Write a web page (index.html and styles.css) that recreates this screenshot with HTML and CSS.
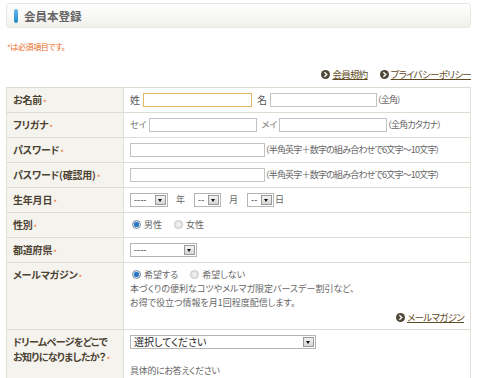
FILE: index.html
```html
<!DOCTYPE html>
<html lang="ja">
<head>
<meta charset="utf-8">
<title>会員本登録</title>
<link rel="stylesheet" href="styles.css">
</head>
<body>
<div class="page">
  <div class="head"><span class="bar"></span><h1>会員本登録</h1></div>
  <p class="note"><span class="req">*</span>は必須項目です。</p>
  <div class="links">
    <a href="#"><svg class="ico" viewBox="0 0 9 9" width="9" height="9"><circle cx="4.5" cy="4.5" r="4.5" fill="#4f4737"/><path d="M3.4 2.3 L5.8 4.5 L3.4 6.7" fill="none" stroke="#fff" stroke-width="1.4"/></svg><span>会員規約</span></a>
    <a href="#"><svg class="ico" viewBox="0 0 9 9" width="9" height="9"><circle cx="4.5" cy="4.5" r="4.5" fill="#4f4737"/><path d="M3.4 2.3 L5.8 4.5 L3.4 6.7" fill="none" stroke="#fff" stroke-width="1.4"/></svg><span>プライバシーポリシー</span></a>
  </div>
  <table class="form">
    <colgroup><col class="c1"><col class="c2"></colgroup>
    <tr>
      <th>お名前<span class="req">*</span></th>
      <td><span class="lbl">姓</span><span class="inp focus w109"></span><span class="lbl l2">名</span><span class="inp w107"></span><span class="hint">（全角）</span></td>
    </tr>
    <tr>
      <th>フリガナ<span class="req">*</span></th>
      <td><span class="lbl gray">セイ</span><span class="inp w108"></span><span class="lbl l2 gray">メイ</span><span class="inp w108"></span><span class="hint">（全角カタカナ）</span></td>
    </tr>
    <tr>
      <th>パスワード<span class="req">*</span></th>
      <td><span class="inp w135"></span><span class="hint">（半角英字＋数字の組み合わせで6文字～10文字）</span></td>
    </tr>
    <tr>
      <th>パスワード(確認用)<span class="req">*</span></th>
      <td><span class="inp w135"></span><span class="hint">（半角英字＋数字の組み合わせで6文字～10文字）</span></td>
    </tr>
    <tr>
      <th>生年月日<span class="req">*</span></th>
      <td><span class="sel w38"><span class="val">----</span><span class="btn"></span></span><span class="unit">年</span><span class="sel w27"><span class="val">--</span><span class="btn"></span></span><span class="unit">月</span><span class="sel w27"><span class="val">--</span><span class="btn"></span></span><span class="unit u3">日</span></td>
    </tr>
    <tr>
      <th>性別<span class="req">*</span></th>
      <td><span class="radio on"></span><span class="rl">男性</span><span class="radio r2"></span><span class="rl">女性</span></td>
    </tr>
    <tr>
      <th>都道府県<span class="req">*</span></th>
      <td><span class="sel w67"><span class="val">----</span><span class="btn"></span></span></td>
    </tr>
    <tr class="mail">
      <th class="top">メールマガジン<span class="req">*</span></th>
      <td>
        <div class="line"><span class="radio on"></span><span class="rl">希望する</span><span class="radio r2"></span><span class="rl">希望しない</span></div>
        <p class="desc">本づくりの便利なコツやメルマガ限定バースデー割引など、<br>お得で役立つ情報を月1回程度配信します。</p>
        <div class="more"><a href="#"><svg class="ico" viewBox="0 0 9 9" width="9" height="9"><circle cx="4.5" cy="4.5" r="4.5" fill="#4f4737"/><path d="M3.4 2.3 L5.8 4.5 L3.4 6.7" fill="none" stroke="#fff" stroke-width="1.4"/></svg><span>メールマガジン</span></a></div>
      </td>
    </tr>
    <tr class="last">
      <th class="top two">ドリームページをどこで<br>お知りになりましたか？<span class="req">*</span></th>
      <td class="top">
        <span class="sel w186"><span class="val dark">選択してください</span><span class="btn"></span></span>
        <p class="ask">具体的にお答えください</p>
      </td>
    </tr>
  </table>
</div>
</body>
</html>
```

FILE: styles.css
```css
* { box-sizing: border-box; }
html, body { margin: 0; padding: 0; background: #fff; }
body {
  font-family: "Noto Sans CJK JP", "Noto Sans", sans-serif;
  font-size: 9px;
  line-height: 14px;
  color: #555;
  font-feature-settings: "palt";
}
.page { width: 465px; margin: 0 0 0 6px; padding-top: 3px; }

.head {
  height: 25px;
  border: 1px solid #e9e7e2;
  border-radius: 3px;
  background: linear-gradient(#ffffff, #f1f0ec);
  display: flex;
  align-items: center;
  padding-left: 7px;
}
.bar {
  width: 4px; height: 14px; border-radius: 2px;
  background: linear-gradient(#63b9ea, #1c8ad2);
  margin-right: 6px;
}
.head h1 { margin: 0; font-size: 11.5px; font-weight: bold; color: #666; }

.note { margin: 13px 0 0; font-size: 8px; line-height: 12px; color: #ea6a22; letter-spacing: -0.4px; }

.links { display: flex; justify-content: flex-end; gap: 12px; margin-top: 14px; height: 14px; }
.links a, .more a { display: flex; align-items: center; color: #5e4a23; text-decoration: none; font-size: 9.5px; letter-spacing: -0.7px; }
.links a span, .more a span { text-decoration: underline; }
.ico { margin-right: 2px; flex: none; }

.form {
  width: 465px; margin-top: 6px;
  border-collapse: collapse; table-layout: fixed;
  border: 1px solid #e2dfd8;
}
.c1 { width: 117px; }
.form tr { height: 25px; }
.form th, .form td {
  border-top: 1px solid #dedbd3; padding: 5px 6px; vertical-align: middle; text-align: left;
  line-height: 14px; height: 25px;
}
.form th {
  background: #f5f3ee; color: #4c4231;
  font-weight: bold; font-size: 10px; border-right: 1px solid #e2dfd8; letter-spacing: -0.2px;
  white-space: nowrap;
}
.form td { white-space: nowrap; }
.form th.top, .form td.top { vertical-align: top; }
.form tr.mail th, .form tr.mail td { height: 67px; }
.form th.two { line-height: 15px; padding-top: 4px; letter-spacing: -0.6px; }
.form tr.last th, .form tr.last td { height: 52px; }
.req { color: #f26b2a; font-size: 8px; font-weight: normal; margin-left: 1px; line-height: 0; vertical-align: -2px; }
.note .req { vertical-align: -1px; }

.lbl { display: inline-block; margin-right: 3px; font-size: 10px; vertical-align: top; }
.lbl.gray { color: #777; margin-right: 2px; font-size: 9px; }
.lbl.l2 { margin-left: 5px; }
.inp {
  display: inline-block; vertical-align: top; height: 14px;
  border: 1px solid #c3c3c3; background: #fff;
}
.inp.focus { border-color: #e2b867; }
.w107 { width: 107px; } .w108 { width: 108px; } .w109 { width: 109px; } .w135 { width: 135px; }
.hint { color: #666; letter-spacing: -0.8px; vertical-align: top; }

.sel {
  display: inline-flex; vertical-align: top; height: 14px;
  border: 1px solid #b5b5b5; background: #fff; align-items: stretch;
}
.sel .val { flex: 1; font-size: 9px; line-height: 12px; padding-left: 3px; color: #333; }
.sel .val.dark { font-size: 10px; color: #222; }
.sel .btn {
  width: 11px; flex: none; margin: 1px; background: linear-gradient(#f2f2f2, #d6d6d6);
  border: 1px solid #9a9a9a; position: relative;
}
.sel .btn::after {
  content: ""; position: absolute; left: 2px; top: 3px;
  border-left: 2.5px solid transparent; border-right: 2.5px solid transparent; border-top: 3px solid #111;
}
.w38 { width: 38px; } .w27 { width: 27px; } .w67 { width: 67px; } .w186 { width: 186px; }
.unit { display: inline-block; margin: 0 9px 0 8px; color: #666; vertical-align: top; }
.unit.u3 { margin: 0 0 0 1px; }

.line { height: 14px; }
.radio {
  display: inline-block; width: 9px; height: 9px; border-radius: 50%;
  vertical-align: top; margin-top: 2px; margin-left: 2px;
  border: 1px solid #c7c7c7; background: radial-gradient(#f4f4f4, #dcdcdc);
}
.radio.on { border-color: #7c8da0; background: radial-gradient(circle, #2b78c5 0 2.2px, #cfe0f0 3px, #e8eef4 4px); }
.radio.r2 { margin-left: 12px; }
.rl { margin-left: 3px; color: #666; vertical-align: top; }

.desc { margin: 0; color: #666; }
.more { display: flex; justify-content: flex-end; height: 14px; }
.ask { margin: 15px 0 0; color: #666; letter-spacing: -0.3px; }
```
